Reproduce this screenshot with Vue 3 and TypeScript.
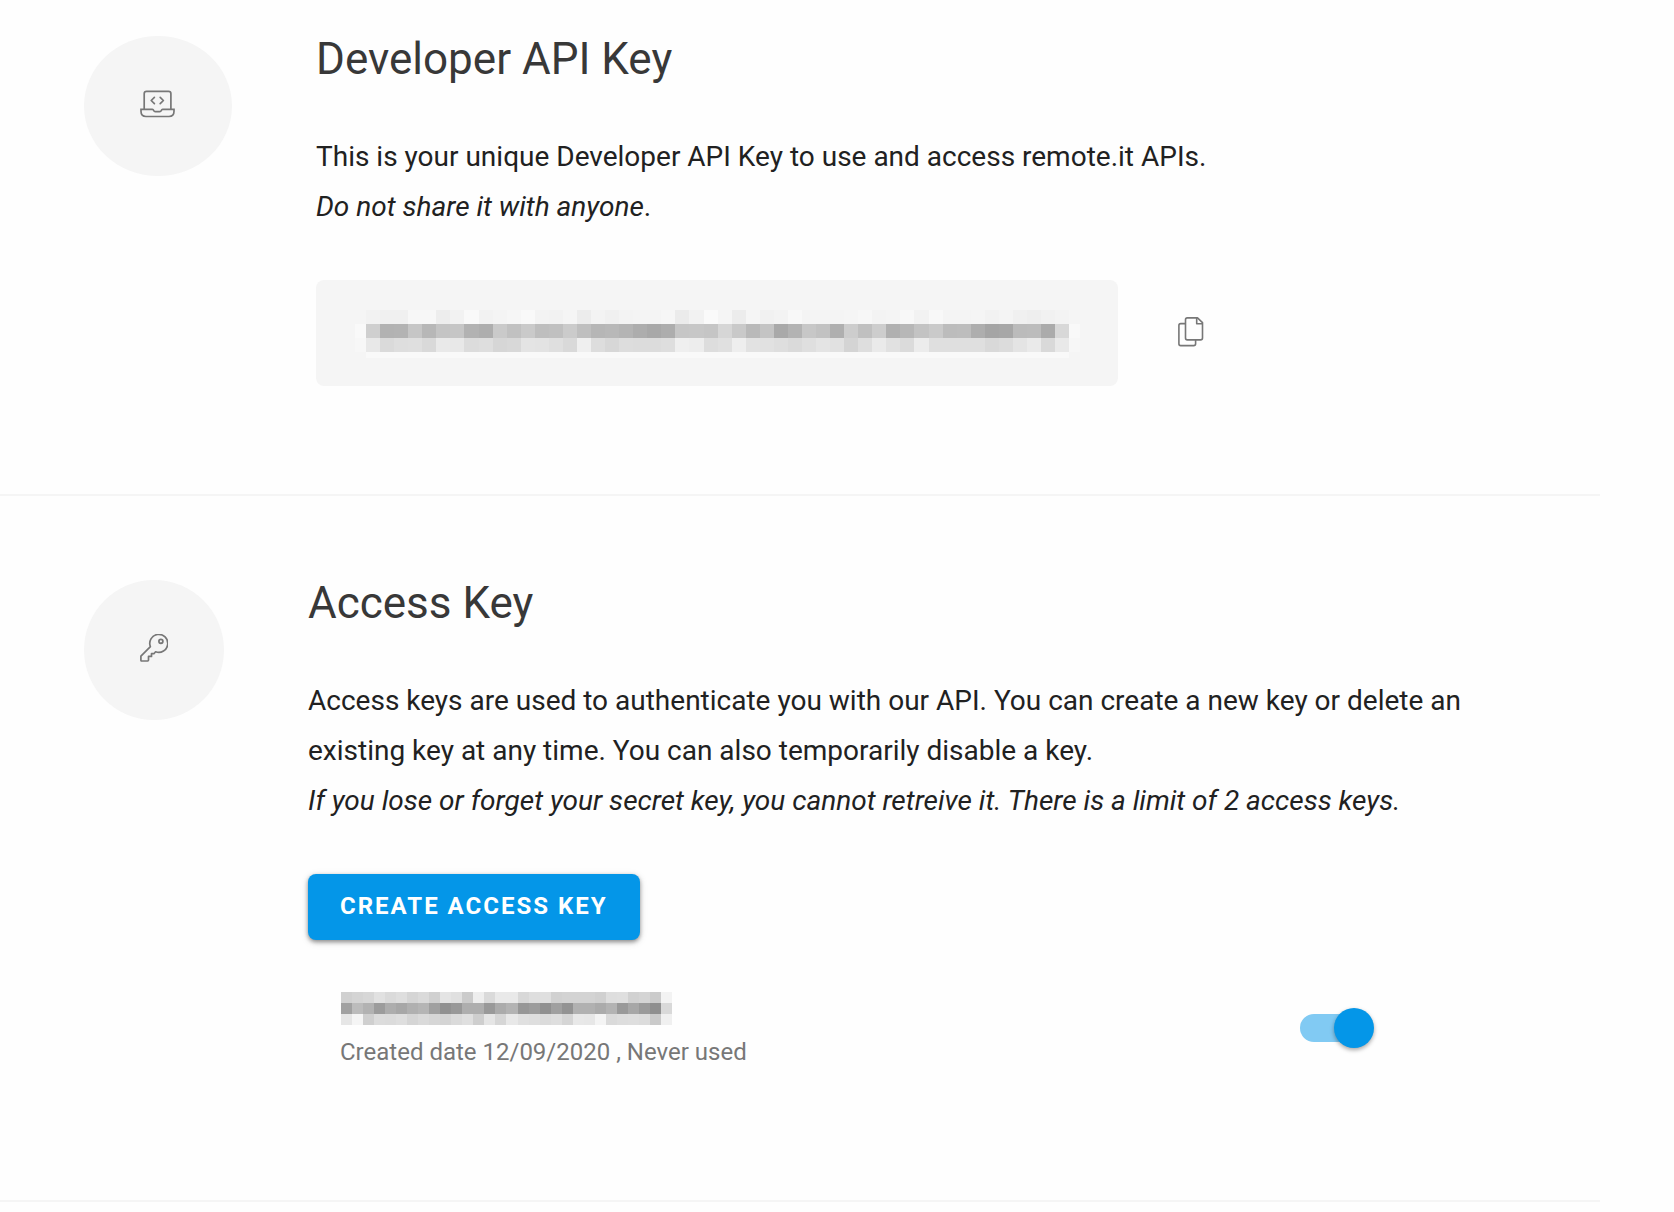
<script setup lang="ts">
import { ref } from 'vue'

interface MaskRow {
  shades: string[]
}

// Every two hex digits give the grey level of one mask cell.
const toRow = (levels: string): MaskRow => ({
  shades: (levels.match(/../g) ?? []).map((level) => `#${level}${level}${level}`),
})

const apiKeyMask: MaskRow[] = [
  'f5f2f0f0f7f7edf2f9f2f4f6f9f3f2f5ecf3f0f3f4f4f6ebf2faf5ecf5f1f3f8f4f4f4f5f7f3f4f8f2f8f4f4f5f2f4f0eef1f3f5',
  'f9cfb2b3c6b7c4c6b2aecac1cabec0cbbfb6b8b4ada8adc6c7c5d6c9b9c4a9b3c7c2afcdc0cdb0b7c3cabcbdaea5a7bbbcabd8f9',
  'f7e8dadedfd9e9e8dcded6d8e4e3dfd9efddd7dddcdcdeefeddde0eee2e1dedadfe4e1d4deeae1dbecdfdfdfdfd9dce4ead9e9f7',
].map(toRow)

const accessKeyMask: MaskRow[] = [
  'd0d4d7e1daded5dad0e4e0cbeedae9e9d8dedfd1d3d3d3d0dedfd1d4cbf3',
  'a1bcb29cada7b0b5a09198aeae99abb3979c90a093b1b1abb399a79a8fd9',
  'e6f5cfdcdbded5dad6d4dadfcee5d6e8e0dedbded5e8e7f4dadddedccaf0',
].map(toRow)

const keyEnabled = ref(true)
</script>

<template>
  <main class="page">
    <section class="section section-first">
      <div class="badge">
        <svg width="36" height="28" viewBox="0 0 36 28" fill="none" stroke="#777" stroke-width="1.7" aria-hidden="true">
          <path d="M4.2 19.2V3.7Q4.2 1.4 6.5 1.4H28.5Q30.9 1.4 30.9 3.7V19.2" />
          <path d="M1 19.4H12.4Q13.3 19.4 13.7 20.5Q14.1 21.6 15.3 21.6H19.7Q20.9 21.6 21.3 20.5Q21.7 19.4 22.6 19.4H34V21.3Q34 26.5 29 26.5H6Q1 26.5 1 21.3Z" />
          <path d="M14.4 7.4L11.2 10.5L14.4 13.6M20.2 7.4L23.4 10.5L20.2 13.6" stroke-linecap="round" stroke-linejoin="round" />
        </svg>
      </div>
      <div class="content">
        <h1>Developer API Key</h1>
        <p>
          This is your unique Developer API Key to use and access remote.it APIs.<br />
          <em>Do not share it with anyone</em>.
        </p>
        <div class="key-row">
          <div class="key-box">
            <div class="mask mask-large" role="img" aria-label="Hidden API key">
              <div v-for="(row, r) in apiKeyMask" :key="r" class="mask-row">
                <i v-for="(shade, c) in row.shades" :key="c" :style="{ background: shade }"></i>
              </div>
              <div class="mask-foot"></div>
            </div>
          </div>
          <button class="copy" type="button" aria-label="Copy API key">
            <svg width="26" height="30" viewBox="0 0 26 30" fill="none" stroke="#777" stroke-width="1.6" stroke-linejoin="round" aria-hidden="true">
              <path d="M9.3 .9H19.5L24.5 5.6V21Q24.5 22.9 22.6 22.9H9.3Q7.5 22.9 7.5 21V2.7Q7.5 .9 9.3 .9Z" />
              <path d="M18.7 1V6.7H24.4" />
              <path d="M7.5 6.6H2.7Q.9 6.6 .9 8.4V26.8Q.9 28.6 2.7 28.6H15.7Q17.6 28.6 17.6 26.8V22.9" />
            </svg>
          </button>
        </div>
      </div>
    </section>

    <section class="section">
      <div class="badge">
        <svg width="28" height="28" viewBox="0 0 28 28" fill="none" stroke="#777" stroke-width="1.7" stroke-linejoin="round" aria-hidden="true">
          <path d="M10.4 12.7A9 9 0 1 1 15.6 17.8L13.9 19.7H11.5V22.4H8.5V26.1Q8.5 27 7.6 27H1.8Q.9 27 .9 26.1V22.2Z" />
          <circle cx="20.9" cy="7.3" r="2" />
        </svg>
      </div>
      <div class="content">
        <h1>Access Key</h1>
        <p>
          Access keys are used to authenticate you with our API. You can create a new key or delete an
          existing key at any time. You can also temporarily disable a key.<br />
          <em>If you lose or forget your secret key, you cannot retreive it. There is a limit of 2 access keys.</em>
        </p>
        <button class="create" type="button">CREATE ACCESS KEY</button>
        <div class="key-item">
          <div>
            <div class="mask mask-small" role="img" aria-label="Hidden access key">
              <div v-for="(row, r) in accessKeyMask" :key="r" class="mask-row">
                <i v-for="(shade, c) in row.shades" :key="c" :style="{ background: shade }"></i>
              </div>
            </div>
            <div class="created">Created date 12/09/2020 , Never used</div>
          </div>
          <input v-model="keyEnabled" class="switch" type="checkbox" role="switch" aria-label="Access key enabled" />
        </div>
      </div>
    </section>
  </main>
</template>

<style>
body {
  margin: 0;
  background: #fefefe;
}
</style>

<style scoped>
.page {
  margin-right: 74px;
  font-family: Roboto, 'Liberation Sans', sans-serif;
  color: #212121;
}

.section {
  display: flex;
  align-items: flex-start;
  gap: 84px;
  padding: 84px;
  border-bottom: 2px solid #f5f5f5;
}

.section-first {
  padding-top: 36px;
  padding-bottom: 108px;
}

.badge {
  display: flex;
  flex: none;
  align-items: center;
  box-sizing: border-box;
  height: 140px;
  padding: 0 56px 4px;
  border-radius: 50%;
  background: #f5f5f5;
}

.content {
  flex: 1;
  min-width: 0;
}

h1 {
  margin: 0 0 50px;
  font-size: 44px;
  font-weight: 400;
  line-height: 46px;
  color: #383838;
}

p {
  margin: 0 0 48px;
  font-size: 28px;
  line-height: 50px;
}

.key-row {
  display: flex;
  align-items: center;
  gap: 60px;
}

.key-box {
  box-sizing: border-box;
  width: 802px;
  height: 106px;
  padding: 30px 38px 30px 39px;
  border-radius: 8px;
  background: #f5f5f5;
}

.mask-row {
  display: flex;
}

.mask-row i {
  flex: 1;
}

.mask-large {
  width: 725px;
}

.mask-large .mask-row {
  height: 14px;
}

.mask-large .mask-row i:first-child,
.mask-large .mask-row i:last-child {
  flex: none;
  width: 11px;
}

.mask-foot {
  height: 6px;
  margin: 0 11px;
  background: #f9f9f9;
}

.mask-small {
  width: 331px;
}

.mask-small .mask-row {
  height: 11px;
}

button {
  border: 0;
  font-family: inherit;
  cursor: pointer;
}

.copy {
  display: flex;
  padding: 0 0 2px;
  background: none;
}

.create {
  height: 66px;
  padding: 0 32px 2px;
  border-radius: 8px;
  background: #0496e8;
  box-shadow: 0 2px 4px rgba(0, 0, 0, 0.4), 0 2px 8px rgba(0, 0, 0, 0.12);
  color: #fff;
  font-size: 24px;
  font-weight: 700;
  line-height: 28px;
  letter-spacing: 2px;
}

.key-item {
  display: flex;
  align-items: center;
  justify-content: space-between;
  padding: 48px 142px 48px 32px;
}

.mask-small {
  margin: 4px 0 0 1px;
}

.created {
  margin-top: 11px;
  color: #777;
  font-size: 24px;
  line-height: 32px;
}

.switch {
  display: grid;
  flex: none;
  align-items: center;
  width: 74px;
  height: 40px;
  margin: 0;
  appearance: none;
  cursor: pointer;
}

.switch::before,
.switch::after {
  content: '';
  grid-area: 1 / 1;
}

.switch::before {
  width: 68px;
  height: 28px;
  border-radius: 14px;
  background: #bdbdbd;
}

.switch::after {
  width: 40px;
  height: 40px;
  border-radius: 50%;
  background: #fafafa;
  box-shadow: 0 2px 4px rgba(0, 0, 0, 0.35);
}

.switch:checked::before {
  background: #81caf3;
}

.switch:checked::after {
  justify-self: end;
  background: #0496e8;
}
</style>
